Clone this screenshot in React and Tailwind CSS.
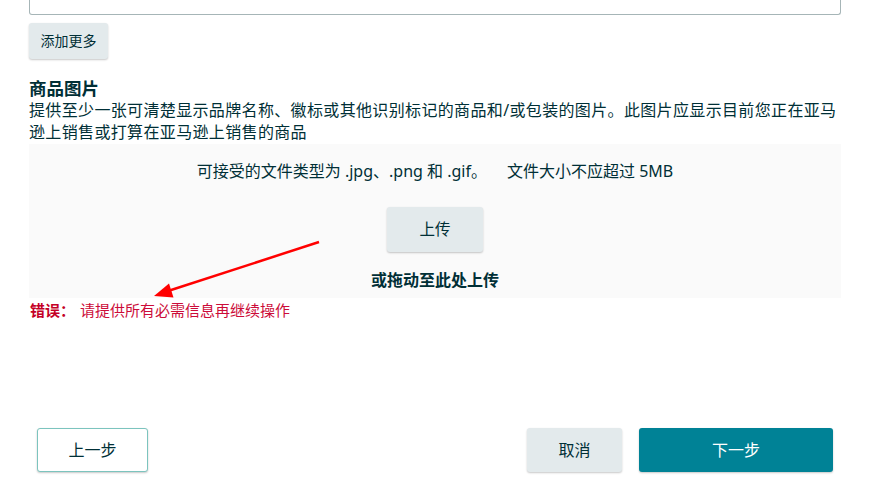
export default function App() {
  return (
    <div className="relative min-h-[485px] w-full bg-white font-['Noto_Sans','Noto_Sans_CJK_SC',sans-serif] text-[#002f36]">
      <div className="pl-[29px] pr-[37px]">
        <div className="h-[15px] rounded-b-[3px] border-x border-b border-[#a6b5b7]" />
        <button className="mt-2 h-[36px] w-[79px] rounded-[3px] bg-[#e3eaec] text-[14px] leading-[20px] shadow-[0_1px_2px_rgba(0,0,0,0.22)]">
          添加更多
        </button>
        <h2 className="mt-[18px] text-[17.5px] font-bold leading-[22px]">商品图片</h2>
        <p className="text-[16px] leading-[22px] tracking-[0.35px]">
          提供至少一张可清楚显示品牌名称、徽标或其他识别标记的商品和/或包装的图片。此图片应显示目前您正在亚马逊上销售或打算在亚马逊上销售的商品
        </p>
        <div className="mt-px flex flex-col items-center bg-[#fafafa] pb-[7px] pt-[16px]">
          <p className="text-[16px] leading-[22px]">
            可接受的文件类型为 .jpg、.png 和 .gif。
            <span className="ml-[20px]">文件大小不应超过 5MB</span>
          </p>
          <button className="mt-[25px] h-[45px] w-[96px] rounded-[3px] bg-[#e3eaec] text-[15.5px] shadow-[0_1px_2px_rgba(0,0,0,0.22)]">
            上传
          </button>
          <p className="mt-[17px] text-[16px] font-bold leading-[22px]">或拖动至此处上传</p>
        </div>
        <p className="mt-[2px] flex text-[15px] leading-[20px] text-[#cc0c39]">
          <span className="pl-px font-bold text-[#c40026]">错误：</span>
          <span className="ml-[5px]">请提供所有必需信息再继续操作</span>
        </p>
      </div>
      <div className="mt-[108px] flex items-center justify-between pl-[37px] pr-[45px]">
        <button className="h-[44px] w-[111px] rounded-[3px] border border-[#7cc4be] bg-white text-[16px] shadow-[0_1px_2px_rgba(0,0,0,0.22)]">
          上一步
        </button>
        <div className="flex gap-[17px]">
          <button className="h-[44px] w-[95px] rounded-[3px] bg-[#e3eaec] text-[16px] shadow-[0_1px_2px_rgba(0,0,0,0.22)]">
            取消
          </button>
          <button className="h-[44px] w-[194px] rounded-[3px] bg-[#008296] text-[16px] text-white shadow-[0_1px_2px_rgba(0,0,0,0.22)]">
            下一步
          </button>
        </div>
      </div>
      <svg
        className="pointer-events-none absolute left-0 top-0"
        width="878"
        height="485"
        viewBox="0 0 878 485"
      >
        <line x1="319" y1="242" x2="168" y2="291" stroke="#ff0000" strokeWidth="2.5" />
        <polygon points="154,296 169,283.5 173.5,297.5" fill="#ff0000" />
      </svg>
    </div>
  );
}
